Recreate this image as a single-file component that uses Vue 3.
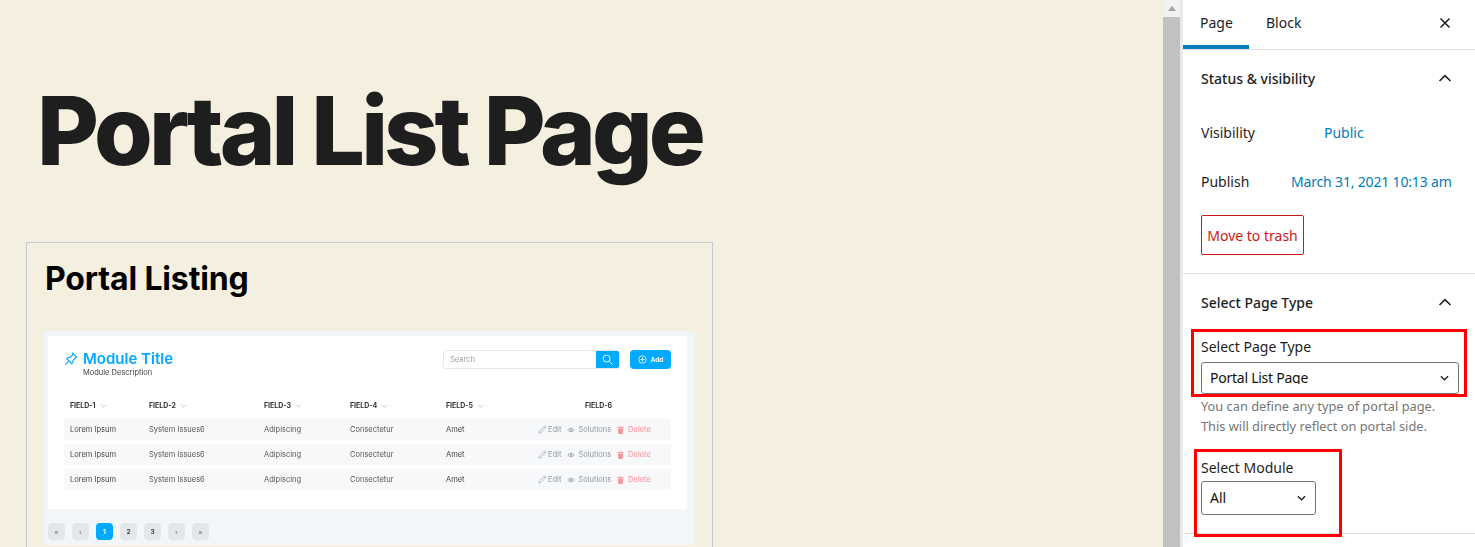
<template>
  <div class="screen">
    <main class="editor">
      <h1 class="page-title">Portal List Page</h1>
      <section class="block">
        <h2 class="block-title">Portal Listing</h2>
        <div class="shot">
          <div class="shot-card">
            <div class="shot-head">
              <div>
                <div class="module-title">
                  <svg class="pin" viewBox="0 0 16 16" fill="none" stroke="#00aaff" stroke-width="1.3">
                    <path d="M10 1.5l4.5 4.5-1.2.6-3 3-.3 2.7-1.1 1-5.7-5.7 1-1.1 2.7-.3 3-3zM5.2 10.8L1.5 14.5" />
                  </svg>
                  <span>Module Title</span>
                </div>
                <div class="module-desc">Module Description</div>
              </div>
              <div class="shot-tools">
                <div class="search">
                  <span class="search-text">Search</span>
                  <span class="search-btn">
                    <svg viewBox="0 0 12 12" width="11" height="11" fill="none" stroke="#fff" stroke-width="1">
                      <circle cx="5" cy="5" r="3.8" /><path d="M8 8l3.4 3.4" />
                    </svg>
                  </span>
                </div>
                <div class="add-btn">
                  <svg viewBox="0 0 12 12" width="9" height="9" fill="none" stroke="#fff" stroke-width="1">
                    <circle cx="6" cy="6" r="5" /><path d="M6 3v6M3 6h6" />
                  </svg>
                  <span>Add</span>
                </div>
              </div>
            </div>
            <div class="cols head-row">
              <div v-for="f in fields" :key="f" class="field">
                {{ f }}
                <svg viewBox="0 0 8 5" width="7" height="4" fill="none" stroke="#a9adb3" stroke-width="0.8"><path d="M1 1l3 3 3-3" /></svg>
              </div>
              <div class="field field-last">FIELD-6</div>
            </div>
            <div v-for="n in 3" :key="n" class="cols data-row">
              <div class="cell-dark">Lorem Ipsum</div>
              <div>System Issues6</div>
              <div>Adipiscing</div>
              <div>Consectetur</div>
              <div class="cell-dark">Amet</div>
              <div class="actions">
                <span class="act act-edit">
                  <svg viewBox="0 0 10 10" width="9" height="9" fill="none" stroke="#a5a9af" stroke-width="0.8"><path d="M1 9l.5-2.2L7.6.9l1.5 1.5L3.2 8.5zM6.6 1.9l1.5 1.5" /></svg>
                  Edit
                </span>
                <span class="act">
                  <svg viewBox="0 0 10 8" width="8" height="6" fill="none" stroke="#8b8f95" stroke-width="1"><path d="M.6 4C3 1 7 1 9.4 4 7 7 3 7 .6 4z" /><circle cx="5" cy="4" r="1" /></svg>
                  Solutions
                </span>
                <span class="act act-del">
                  <svg viewBox="0 0 8 10" width="7" height="8" fill="#ff8f96"><path d="M0 1.5h8v1H0zM2.8.3h2.4v1H2.8zM.9 3h6.2l-.5 7H1.4z" /></svg>
                  Delete
                </span>
              </div>
            </div>
          </div>
          <div class="pager">
            <span v-for="p in pages" :key="p.label" class="page-btn" :class="p.cls">{{ p.label }}</span>
          </div>
        </div>
      </section>
    </main>

    <div class="scrollbar">
      <div class="scroll-up"><span class="scroll-arrow"></span></div>
      <div class="scroll-thumb"></div>
    </div>
    <div class="strip"></div>

    <aside class="sidebar">
      <div class="tabs">
        <div class="tab tab-on">Page</div>
        <div class="tab">Block</div>
        <svg class="close" viewBox="0 0 12 12" width="12" height="12" fill="none" stroke="#1e1e1e" stroke-width="1.5">
          <path d="M1.5 1.5l9 9M10.5 1.5l-9 9" />
        </svg>
      </div>

      <section class="panel panel-status">
        <div class="panel-head">
          <span>Status &amp; visibility</span>
          <svg viewBox="0 0 14 8" width="14" height="8" fill="none" stroke="#1e1e1e" stroke-width="1.6"><path d="M1.5 7L7 1.7 12.5 7" /></svg>
        </div>
        <div class="info-row info-vis">
          <span>Visibility</span>
          <a class="link">Public</a>
        </div>
        <div class="info-row info-pub">
          <span>Publish</span>
          <a class="link">March 31, 2021 10:13 am</a>
        </div>
        <div class="trash">Move to trash</div>
      </section>

      <section class="panel panel-type">
        <div class="panel-head">
          <span>Select Page Type</span>
          <svg viewBox="0 0 14 8" width="14" height="8" fill="none" stroke="#1e1e1e" stroke-width="1.6"><path d="M1.5 7L7 1.7 12.5 7" /></svg>
        </div>
        <label class="field-label">Select Page Type</label>
        <div class="select select-wide">
          <span class="select-text">Portal List Page</span>
          <svg viewBox="0 0 10 6" width="9" height="6" fill="none" stroke="#1e1e1e" stroke-width="1.4"><path d="M1 1l4 4 4-4" /></svg>
        </div>
        <p class="help">You can define any type of portal page.<br />This will directly reflect on portal side.</p>
        <label class="field-label label-module">Select Module</label>
        <div class="select select-small">
          <span class="select-text">All</span>
          <svg viewBox="0 0 10 6" width="9" height="6" fill="none" stroke="#1e1e1e" stroke-width="1.4"><path d="M1 1l4 4 4-4" /></svg>
        </div>
        <div class="mark mark-type"></div>
        <div class="mark mark-module"></div>
      </section>
    </aside>
  </div>
</template>

<script setup>
const fields = ['FIELD-1', 'FIELD-2', 'FIELD-3', 'FIELD-4', 'FIELD-5']
const pages = [
  { label: '«', cls: 'dim' },
  { label: '‹', cls: 'dim' },
  { label: '1', cls: 'on' },
  { label: '2', cls: '' },
  { label: '3', cls: '' },
  { label: '›', cls: 'dim' },
  { label: '»', cls: 'dim' }
]
</script>

<style>
html, body {
  margin: 0;
  overflow: hidden;
}
</style>

<style scoped>
.screen {
  display: flex;
  width: 1475px;
  height: 547px;
  overflow: hidden;
  background: #fff;
}
.editor {
  width: 1163px;
  flex: none;
  height: 547px;
  overflow: hidden;
  background: #f5efe0;
  box-sizing: border-box;
  padding: 83px 0 0 26px;
}
.page-title {
  margin: 0 0 0 11px;
  font-family: Inter, sans-serif;
  font-size: 95px;
  line-height: 95px;
  font-weight: 800;
  letter-spacing: -3.95px;
  color: #1e1e1e;
  white-space: nowrap;
}
.block {
  width: 687px;
  box-sizing: border-box;
  margin-top: 64px;
  border: 1px solid #c5c9d0;
  padding: 0 17px 30px;
}
.block-title {
  margin: 0;
  padding: 18px 0 0 1px;
  font-family: Inter, sans-serif;
  font-size: 32px;
  line-height: 36px;
  font-weight: 700;
  letter-spacing: -0.15px;
  color: #000;
}
.shot {
  margin-top: 34px;
  background: #f3f6f9;
  padding: 5px 8px 0 4px;
  height: 214px;
  box-sizing: border-box;
  font-family: Inter, sans-serif;
  filter: blur(0.35px);
}
.shot-card {
  background: #fff;
  height: 173px;
  box-sizing: border-box;
  padding: 14px 16px 0;
}
.shot-head {
  display: flex;
  justify-content: space-between;
  height: 42px;
}
.module-title {
  display: flex;
  align-items: center;
  gap: 5px;
  font-size: 15px;
  line-height: 18px;
  font-weight: 600;
  color: #00aaff;
}
.pin {
  width: 14px;
  height: 14px;
}
.module-desc {
  font-size: 7.5px;
  line-height: 10px;
  color: #444;
  margin: 0 0 0 19px;
}
.shot-tools {
  display: flex;
  gap: 10px;
  height: 19px;
}
.search {
  width: 177px;
  height: 19px;
  box-sizing: border-box;
  display: flex;
  justify-content: space-between;
  align-items: stretch;
  border: 1px solid #e4e7ea;
  border-radius: 3px;
  overflow: hidden;
}
.search-text {
  font-size: 7.5px;
  line-height: 17px;
  color: #9a9ea4;
  padding-left: 6px;
}
.search-btn {
  width: 23px;
  background: #00aaff;
  display: flex;
  align-items: center;
  justify-content: center;
}
.add-btn {
  width: 41px;
  height: 19px;
  background: #00aaff;
  border-radius: 4px;
  display: flex;
  align-items: center;
  justify-content: center;
  gap: 4px;
  color: #fff;
  font-size: 6.5px;
  font-weight: 700;
}
.cols {
  display: grid;
  grid-template-columns: 79px 115px 86px 96px 1fr 133px;
  align-items: center;
  padding-left: 6px;
}
.head-row {
  height: 27px;
}
.field {
  font-size: 7px;
  font-weight: 700;
  color: #333;
  display: flex;
  align-items: center;
  gap: 4px;
  white-space: nowrap;
}
.field-last {
  padding-left: 47px;
}
.data-row {
  height: 21px;
  margin-bottom: 4px;
  background: #f6f8fa;
  font-size: 7.5px;
  color: #555;
  white-space: nowrap;
}
.cell-dark {
  color: #444;
}
.actions {
  display: flex;
  gap: 6px;
}
.act {
  display: flex;
  align-items: center;
  gap: 3px;
  color: #93979d;
}
.act-edit {
  gap: 1px;
}
.act-del {
  color: #ff8f96;
  gap: 4px;
}
.pager {
  display: flex;
  gap: 7px;
  margin-top: 14px;
}
.page-btn {
  width: 17px;
  height: 17px;
  border-radius: 4px;
  background: #e4e7ea;
  color: #444;
  font-size: 6.5px;
  font-weight: 700;
  display: flex;
  align-items: center;
  justify-content: center;
}
.page-btn.dim {
  color: #8b8f95;
}
.page-btn.on {
  background: #00aaff;
  color: #fff;
}

.scrollbar {
  width: 17px;
  flex: none;
  background: #f1f1f1;
}
.scroll-up {
  height: 17px;
  display: flex;
  align-items: center;
  justify-content: center;
}
.scroll-arrow {
  width: 0;
  height: 0;
  border-left: 4.5px solid transparent;
  border-right: 4.5px solid transparent;
  border-bottom: 5px solid #a3a3a3;
}
.scroll-thumb {
  height: 530px;
  background: #c1c1c1;
}
.strip {
  width: 3px;
  flex: none;
  background: #eaeaea;
}

.sidebar {
  flex: 1;
  min-width: 0;
  font-family: "Noto Sans", sans-serif;
  font-size: 14px;
  color: #1e1e1e;
  background: #fff;
}
.tabs {
  position: relative;
  display: flex;
  height: 49px;
  border-bottom: 1px solid #e0e0e0;
}
.tab {
  height: 49px;
  padding: 0 17px;
  line-height: 46px;
  box-sizing: border-box;
}
.tab-on {
  width: 66px;
  border-bottom: 4px solid #007cba;
}
.close {
  position: absolute;
  top: 17px;
  right: 24px;
}
.panel {
  position: relative;
  box-sizing: border-box;
  padding: 0 18px;
  border-bottom: 1px solid #e0e0e0;
}
.panel-status {
  height: 224px;
}
.panel-type {
  height: 260px;
}
.panel-head {
  display: flex;
  justify-content: space-between;
  align-items: center;
  padding-right: 5px;
  height: 56px;
  font-weight: 500;
}
.info-row {
  display: flex;
  line-height: 20px;
}
.info-row span {
  width: 123px;
}
.info-vis {
  padding-top: 17px;
}
.info-pub {
  padding-top: 29px;
}
.info-pub span {
  width: 90px;
}
.link {
  color: #007cba;
}
.info-pub .link {
  letter-spacing: -0.17px;
}
.trash {
  margin-top: 23px;
  width: 103px;
  height: 40px;
  box-sizing: border-box;
  border: 1px solid #cc1818;
  border-radius: 2px;
  color: #cc1818;
  line-height: 40px;
  text-align: center;
  white-space: nowrap;
}
.field-label {
  display: block;
  line-height: 20px;
  margin-top: 7px;
}
.label-module {
  margin-top: 22px;
}
.select {
  box-sizing: border-box;
  height: 32px;
  margin-top: 5px;
  border: 1px solid #757575;
  border-radius: 3px;
  padding: 0 9px 0 8px;
  display: flex;
  justify-content: space-between;
  align-items: center;
  overflow: hidden;
  color: #111;
}
.select-text {
  display: block;
  align-self: flex-start;
  height: 21px;
  line-height: 30px;
  overflow: hidden;
}
.select-wide {
  width: 258px;
  letter-spacing: -0.25px;
}
.select-small {
  width: 115px;
  height: 34px;
  margin-top: 3px;
}
.select-small .select-text {
  height: 30px;
  line-height: 32px;
}
.help {
  margin: 3px 0 0;
  font-size: 12.8px;
  line-height: 19.5px;
  color: #757575;
  white-space: nowrap;
}
.mark {
  position: absolute;
  border: 3px solid #f00;
  box-sizing: border-box;
  pointer-events: none;
}
.mark-type {
  left: 8px;
  top: 55px;
  width: 276px;
  height: 68px;
}
.mark-module {
  left: 11px;
  top: 175px;
  width: 148px;
  height: 88px;
}
</style>
